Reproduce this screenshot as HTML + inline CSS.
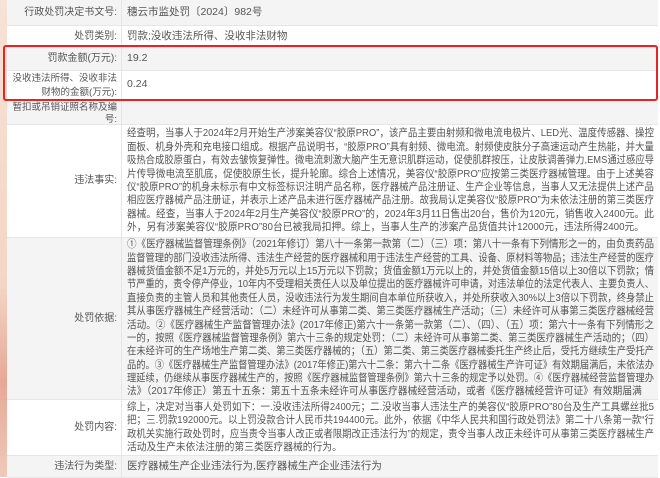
<!DOCTYPE html>
<html><head><meta charset="utf-8"><style>
*{margin:0;padding:0;box-sizing:border-box}
body{width:660px;height:477px;overflow:hidden;background:#fff;font-family:"Liberation Sans","Noto Sans CJK SC",sans-serif;font-size:10.5px;color:#555;position:relative}
.strip{position:absolute;left:0;top:0;width:7px;height:477px;background:linear-gradient(#f6e2d6,#f3d5c4 60%,#e6a896 80%,#efc9bb)}
.row{position:absolute;left:7px;width:651px;border-bottom:1px solid #e6e6e6;display:flex;overflow:hidden}
.row.g{background:#f4f4f4}
.l{width:115px;flex:none;text-align:right;padding-right:4px;border-right:1px solid #e6e6e6;display:flex;align-items:center;justify-content:flex-end;line-height:13.4px;white-space:nowrap;font-size:10px}
.l.s{font-size:9.5px;display:block;text-align:right;padding-top:1px}
.c{flex:1;min-width:0;padding-left:5px;padding-right:4px;display:flex;flex-direction:column;justify-content:center;line-height:13.4px;overflow:hidden}
.p div{white-space:nowrap;height:13.4px;width:527px}
.p div span{display:inline-block;transform-origin:0 0}
.red{position:absolute;left:3px;top:45px;width:655px;height:56px;border:2px solid #e42525;border-radius:3px}
</style></head><body>
<div class="strip"></div>
<div class="row g" style="top:0;height:26px"><div class="l">行政处罚决定书文号:</div><div class="c">穗云市监处罚〔2024〕982号</div></div>
<div class="row" style="top:26px;height:22px"><div class="l">处罚类别:</div><div class="c">罚款;没收违法所得、没收非法财物</div></div>
<div class="row g" style="top:48px;height:23px"><div class="l">罚款金额(万元):</div><div class="c">19.2</div></div>
<div class="row" style="top:71px;height:29px"><div class="l s" style="line-height:13.5px">没收违法所得、没收非法<br>财物的金额(万元):</div><div class="c">0.24</div></div>
<div class="row g" style="top:100px;height:25px"><div class="l s" style="line-height:11.5px;padding-top:2px">暂扣或吊销证照名称及编<br>号:</div><div class="c"></div></div>
<div class="row" style="top:125px;height:113px"><div class="l">违法事实:</div><div class="c p">
<div><span>经查明，当事人于2024年2月开始生产涉案美容仪“胶原PRO”，该产品主要由射频和微电流电极片、LED光、温度传感器、操控</span></div>
<div><span>面板、机身外壳和充电接口组成。根据产品说明书，“胶原PRO”具有射频、微电流。射频使皮肤分子高速运动产生热能，并大量</span></div>
<div><span>吸热合成胶原蛋白，有效去皱恢复弹性。微电流刺激大脑产生无意识肌群运动，促使肌群按压，让皮肤调善弹力,EMS通过感应导</span></div>
<div><span>片传导微电流至肌底，促使胶原生长，提升轮廓。综合上述情况，美容仪“胶原PRO”应按第三类医疗器械管理。由于上述美容</span></div>
<div><span>仪“胶原PRO”的机身未标示有中文标签标识注明产品名称，医疗器械产品注册证、生产企业等信息，当事人又无法提供上述产品</span></div>
<div><span>相应医疗器械产品注册证，并表示上述产品未进行医疗器械产品注册。故我局认定美容仪“胶原PRO”为未依法注册的第三类医疗</span></div>
<div><span>器械。经查，当事人于2024年2月生产美容仪“胶原PRO”的，2024年3月11日售出20台，售价为120元，销售收入2400元。此</span></div>
<div class="e"><span>外，另有涉案美容仪“胶原PRO”80台已被我局扣押。综上，当事人生产的涉案产品货值共计12000元，违法所得2400元。</span></div>
</div></div>
<div class="row g" style="top:238px;height:162px"><div class="l">处罚依据:</div><div class="c p">
<div><span>①《医疗器械监督管理条例》（2021年修订）第八十一条第一款第（二）（三）项：第八十一条有下列情形之一的，由负责药品</span></div>
<div><span>监督管理的部门没收违法所得、违法生产经营的医疗器械和用于违法生产经营的工具、设备、原材料等物品；违法生产经营的医疗</span></div>
<div><span>器械货值金额不足1万元的，并处5万元以上15万元以下罚款；货值金额1万元以上的，并处货值金额15倍以上30倍以下罚款；情</span></div>
<div><span>节严重的，责令停产停业，10年内不受理相关责任人以及单位提出的医疗器械许可申请，对违法单位的法定代表人、主要负责人、</span></div>
<div><span>直接负责的主管人员和其他责任人员，没收违法行为发生期间自本单位所获收入，并处所获收入30%以上3倍以下罚款，终身禁止</span></div>
<div><span>其从事医疗器械生产经营活动：（二）未经许可从事第二类、第三类医疗器械生产活动；（三）未经许可从事第三类医疗器械经营</span></div>
<div><span>活动。②《医疗器械生产监督管理办法》(2017年修正)第六十一条第一款第（二）、（四）、（五）项：第六十一条有下列情形之</span></div>
<div><span>一的，按照《医疗器械监督管理条例》第六十三条的规定处罚：（二）未经许可从事第二类、第三类医疗器械生产活动的；（四）</span></div>
<div><span>在未经许可的生产场地生产第二类、第三类医疗器械的；（五）第二类、第三类医疗器械委托生产终止后，受托方继续生产受托产</span></div>
<div><span>品的。③《医疗器械生产监督管理办法》(2017年修正)第六十二条：第六十二条《医疗器械生产许可证》有效期届满后，未依法办</span></div>
<div><span>理延续，仍继续从事医疗器械生产的，按照《医疗器械监督管理条例》第六十三条的规定予以处罚。④《医疗器械经营监督管理办</span></div>
<div class="e"><span>法》（2017年修正）第五十五条：第五十五条未经许可从事医疗器械经营活动，或者《医疗器械经营许可证》有效期届满</span></div>
</div></div>
<div class="row" style="top:400px;height:56px"><div class="l">处罚内容:</div><div class="c p">
<div><span>综上，决定对当事人处罚如下：一.没收违法所得2400元；二.没收当事人违法生产的美容仪“胶原PRO”80台及生产工具螺丝批5</span></div>
<div><span>把；三.罚款192000元。以上罚没款合计人民币共194400元。此外，依据《中华人民共和国行政处罚法》第二十八条第一款“行</span></div>
<div><span>政机关实施行政处罚时，应当责令当事人改正或者限期改正违法行为”的规定，责令当事人改正未经许可从事第三类医疗器械生产</span></div>
<div class="e"><span>活动及生产未依法注册的第三类医疗器械的行为。</span></div>
</div></div>
<div class="row g" style="top:456px;height:22px"><div class="l">违法行为类型:</div><div class="c">医疗器械生产企业违法行为,医疗器械生产企业违法行为</div></div>
<div class="red"></div>
<script>
document.querySelectorAll('.p div').forEach(function(d){
  var s=d.firstChild; var w=s.getBoundingClientRect().width; var W=527;
  var r=W/w;
  if(d.classList.contains('e')) r=Math.min(r,0.93);
  s.style.transform='scaleX('+r+')';
});
</script>
</body></html>
